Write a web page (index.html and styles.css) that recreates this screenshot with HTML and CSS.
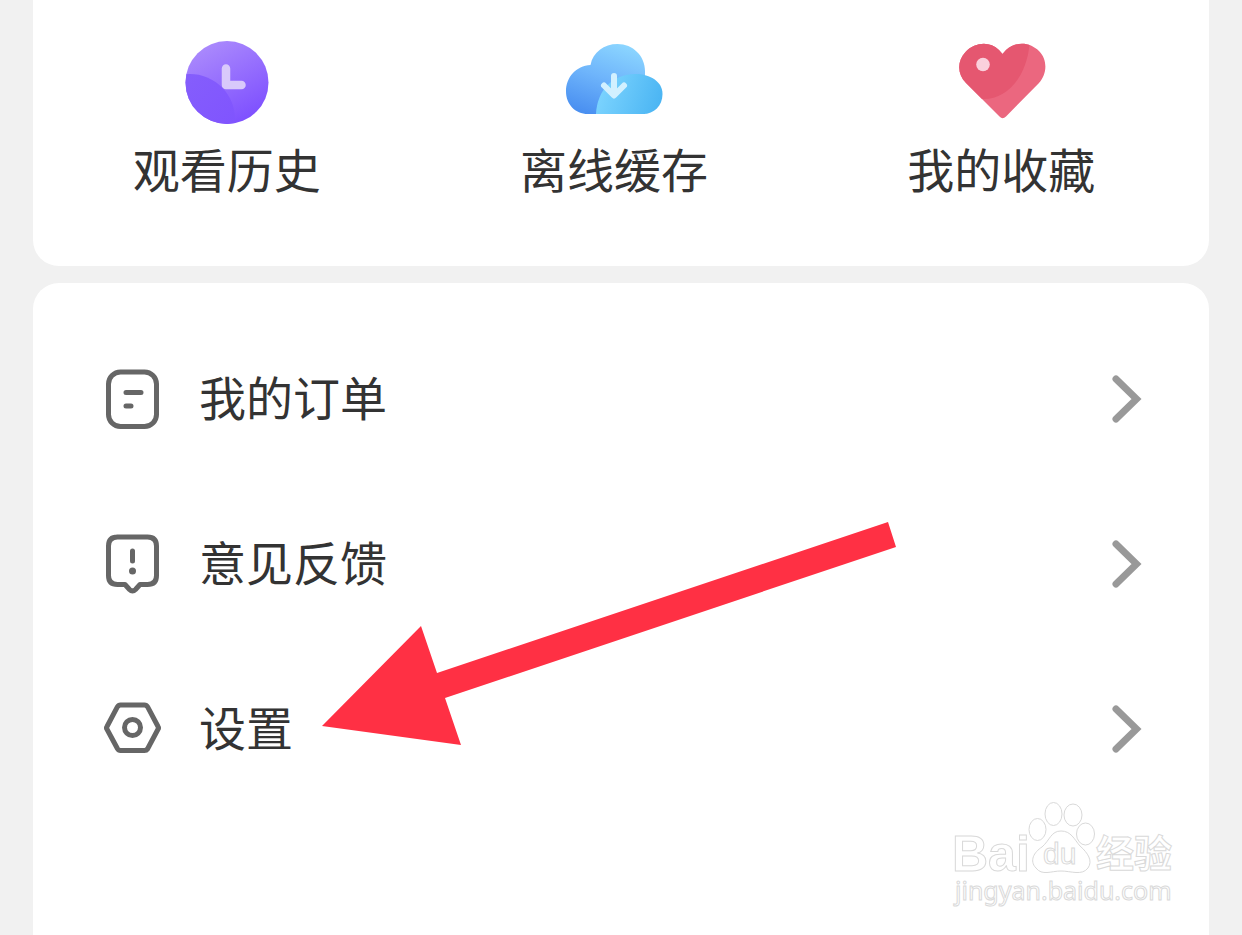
FILE: index.html
```html
<!DOCTYPE html>
<html lang="zh-CN">
<head>
<meta charset="utf-8">
<meta name="viewport" content="width=device-width, initial-scale=1">
<title>我的</title>
<link rel="stylesheet" href="styles.css">
</head>
<body>
<main class="page">
  <nav class="card shortcuts">
    <a class="shortcut" href="#">
      <svg class="shortcut-icon" viewBox="0 0 100 90" aria-hidden="true">
        <defs>
          <linearGradient id="clockBack" x1="0.2" y1="0" x2="0.75" y2="1"><stop offset="0" stop-color="#ad8dfc"/><stop offset="1" stop-color="#7c4dff"/></linearGradient>
          <linearGradient id="clockFront" x1="0" y1="0" x2="1" y2="1"><stop offset="0" stop-color="#8762fb"/><stop offset="1" stop-color="#7e50ff"/></linearGradient>
          <clipPath id="clockClip"><circle cx="50" cy="45.500" r="41.500"/></clipPath>
        </defs>
        <circle cx="50" cy="45.500" r="41.500" fill="url(#clockBack)"/>
        <circle cx="13" cy="82" r="45" fill="url(#clockFront)" clip-path="url(#clockClip)"/>
        <path d="M49 31.500V48h15.500" fill="none" stroke="#d9c9fb" stroke-width="8.500" stroke-linecap="round" stroke-linejoin="round"/>
      </svg>
      <span>观看历史</span>
    </a>
    <a class="shortcut" href="#">
      <svg class="shortcut-icon" viewBox="0 0 100 90" aria-hidden="true">
        <defs>
          <linearGradient id="cloudBack" x1="0.7" y1="0" x2="0.3" y2="1"><stop offset="0" stop-color="#8bd5ff"/><stop offset="0.5" stop-color="#6eb4fb"/><stop offset="1" stop-color="#4a90f1"/></linearGradient>
          <linearGradient id="cloudFront" x1="0" y1="0.4" x2="1" y2="0.6"><stop offset="0" stop-color="#7ed5ff"/><stop offset="1" stop-color="#4bb5f3"/></linearGradient>
        </defs>
        <path d="M24 77C11 77 2 67 2 54.500 2 40 12 29 26.500 28 29 15 40 7 53.500 7 69 7 81 19 81 34V77Z" fill="url(#cloudBack)"/>
        <path d="M32 77C33 53 49 37 71 37 87 37 98.500 45 98.500 57 98.500 69 90 77 79 77Z" fill="url(#cloudFront)"/>
        <path d="M50 39v19M40 48.500l10 10 10-10" fill="none" stroke="#d2f0ff" stroke-width="6" stroke-linecap="round" stroke-linejoin="round"/>
      </svg>
      <span>离线缓存</span>
    </a>
    <a class="shortcut" href="#">
      <svg class="shortcut-icon" viewBox="-2 0 100 90" aria-hidden="true">
        <defs>
          <clipPath id="heartClip"><path d="M46.500 79.500L13 46C4 37 4 24 12.500 15 22 5 37 4 46 13L49.500 17 53 13C63 4 77 5 86 14 95 23 94 37 86 46L53 79.500Q49.500 83 46.500 79.500Z"/></clipPath>
        </defs>
        <g clip-path="url(#heartClip)">
          <path d="M0 0h100v90H0Z" fill="#eb677f"/>
          <path d="M0 0H77C76 38 55 62 31 62H0Z" fill="#e55770"/>
        </g>
        <circle cx="30" cy="27.500" r="6.800" fill="#fad0dc"/>
      </svg>
      <span>我的收藏</span>
    </a>
  </nav>

  <section class="card menu">
    <a class="row" href="#">
      <svg class="row-icon" viewBox="0 0 60 62" aria-hidden="true">
        <rect x="6.500" y="4" width="48" height="54.500" rx="12"/>
        <path d="M24 24.500h15M24 38h5"/>
      </svg>
      <span class="row-label">我的订单</span>
      <svg class="chevron" viewBox="0 0 30 50" aria-hidden="true"><path d="M4 5l20.500 20L4 45"/></svg>
    </a>
    <a class="row" href="#">
      <svg class="row-icon" viewBox="0 0 60 62" aria-hidden="true">
        <path d="M15 4h30.500q9 0 9 9v29.500q0 9-9 9H38l-4.500 5q-3 3-6 0L23 51.500H15.500q-9 0-9-9V13q0-9 9-9Z"/>
        <path d="M30.500 18V28"/><circle class="dot" cx="30.500" cy="38" r="3.500"/>
      </svg>
      <span class="row-label">意见反馈</span>
      <svg class="chevron" viewBox="0 0 30 50" aria-hidden="true"><path d="M4 5l20.500 20L4 45"/></svg>
    </a>
    <a class="row" href="#">
      <svg class="row-icon" viewBox="0 0 60 62" aria-hidden="true">
        <path d="M18.500 7h24q2 0 3 1.700L56 28.500q1 1.400 0 2.800L45.500 51Q44.500 52.500 42.500 52.500H18.500q-2 0-3-1.700L5 31.300q-1-1.400 0-2.800L15.500 8.700Q16.500 7 18.500 7Z"/>
        <circle cx="30.500" cy="29.500" r="8"/>
      </svg>
      <span class="row-label">设置</span>
      <svg class="chevron" viewBox="0 0 30 50" aria-hidden="true"><path d="M4 5l20.500 20L4 45"/></svg>
    </a>
    <svg class="arrow" viewBox="0 0 574 224" aria-hidden="true"><path d="M0 204L99 104 115 151 566 0 574 25 123 176 139 223Z"/></svg>
    <svg class="watermark" viewBox="0 0 230 114" role="img" aria-label="Baidu 经验">
      <text class="mark-bold" x="3" y="74">Bai</text>
      <g class="paw">
        <ellipse cx="88.500" cy="32.500" rx="8.500" ry="11"/><ellipse cx="104.500" cy="17" rx="8.500" ry="11.500"/><ellipse cx="124" cy="18" rx="9" ry="11"/><ellipse cx="136.500" cy="37" rx="9" ry="11"/>
        <path d="M87 71C80 64 85 55 93 50 101 43 102 34 112 34 122 34 125 42 131 49 139 56 144 64 139 71 133 79 122 74 112 74 102 74 93 79 87 71Z"/>
      </g>
      <text class="mark-du" x="94" y="67">du</text>
      <text class="mark-cjk" x="147" y="70">经验</text>
      <text class="mark-url" x="6" y="103">jingyan.baidu.com</text>
    </svg>
  </section>
</main>
</body>
</html>
```
FILE: styles.css
```css
* { box-sizing: border-box; }

body {
  margin: 0;
  background: #f1f1f1;
  color: #333;
  font-family: "Noto Sans CJK SC", sans-serif;
  font-size: 47px;
  line-height: 64px;
}

a { color: inherit; text-decoration: none; }

.page {
  display: flex;
  flex-direction: column;
  gap: 17px;
  min-height: 100vh;
  padding: 0 33px;
}

.card { background: #fff; border-radius: 26px; }

.shortcuts {
  display: grid;
  grid-template-columns: repeat(3, 1fr);
  padding: 37px 14px 66px 0;
  border-radius: 0 0 26px 26px;
}

.shortcut {
  display: flex;
  flex-direction: column;
  align-items: center;
  gap: 9px;
}

.shortcut-icon { width: 100px; height: 90px; }

.menu {
  position: relative;
  flex: 1;
  padding: 33px 67px 90px 69px;
  border-radius: 26px 26px 0 0;
}

.row {
  display: flex;
  align-items: center;
  height: 165px;
}

.row-icon {
  width: 60px;
  height: 62px;
  margin-right: 37px;
  fill: none;
  stroke: #666;
  stroke-width: 5;
  stroke-linecap: round;
  stroke-linejoin: round;
}

.row-icon .dot { fill: #666; stroke: none; }

.row-label { flex: 1; padding-bottom: 6px; }

.chevron {
  width: 30px;
  height: 50px;
  fill: none;
  stroke: #999;
  stroke-width: 7;
  stroke-linecap: round;
}

.arrow {
  position: absolute;
  left: 289px;
  top: 239px;
  width: 574px;
  height: 224px;
  fill: #ff3044;
}

.watermark {
  position: absolute;
  right: 30px;
  top: 514px;
  width: 230px;
  height: 114px;
  fill: #fff;
  stroke: #d9d9d9;
  stroke-width: 1;
}

.mark-bold { font: bold 50px "Liberation Sans", sans-serif; }
.mark-du { font: 30px "Liberation Sans", sans-serif; }
.mark-cjk { font: bold 38px "Noto Sans CJK SC", sans-serif; }
.mark-url { font: 25px "Noto Sans", sans-serif; }
```
